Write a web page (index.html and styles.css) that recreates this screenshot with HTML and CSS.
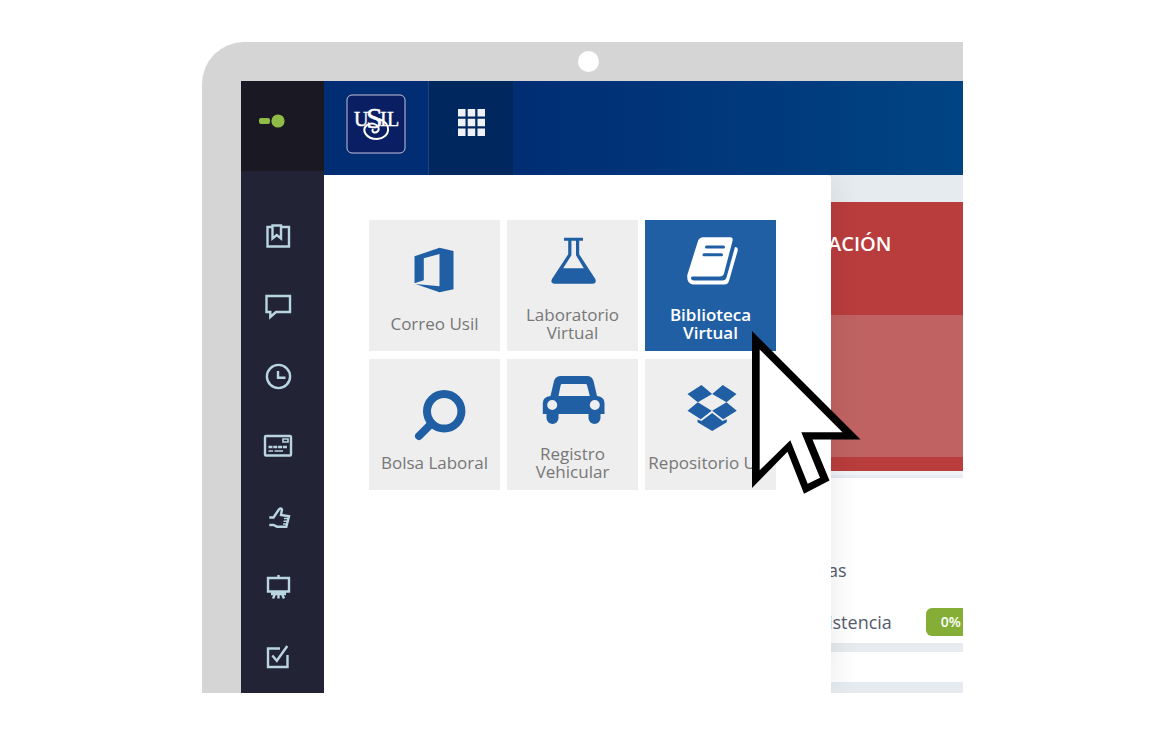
FILE: index.html
```html
<!DOCTYPE html>
<html lang="es">
<head>
  <meta charset="UTF-8" />
  <meta name="viewport" content="width=device-width, initial-scale=1.0" />
  <title>Biblioteca Virtual</title>
  <link rel="stylesheet" href="styles.css">
</head>
<body>
  <div class="device">
    <div class="bezel"><span class="camera"></span></div>

    <div class="screen">
      <aside class="sidebar">
        <button class="toggle" type="button" aria-label="Contraer">
          <svg width="28" height="14" viewBox="0 0 28 14"><rect x="1" y="4" width="11" height="6" rx="2"/><circle cx="20" cy="7" r="6.6"/></svg>
        </button>
        <nav class="side-nav">
          <a href="#" aria-label="Cursos">
            <svg viewBox="0 0 30 30"><path d="M9 6H4.5V25.500H26V6H18M9.500 4.500H18V17.500L13.800 14L9.500 17.500Z"/></svg>
          </a>
          <a href="#" aria-label="Mensajes">
            <svg viewBox="0 0 30 30"><path d="M3.500 5H27V21H13L7.300 26V21H3.500Z"/></svg>
          </a>
          <a href="#" aria-label="Horario">
            <svg viewBox="0 0 30 30"><circle cx="15.500" cy="15.500" r="11.600"/><path d="M15 10V16.700H22.500"/></svg>
          </a>
          <a href="#" aria-label="Pagos">
            <svg viewBox="0 0 30 30"><rect x="2" y="5" width="26" height="19.500" rx="1"/><path d="M20 8H25V11H20Z" stroke-width="1.6"/><path d="M5.500 16H24" stroke-dasharray="4 .8" stroke-width="2.600"/><path d="M5.500 20H10M11.500 20H20" stroke-width="1.500"/></svg>
          </a>
          <a href="#" aria-label="Encuestas">
            <svg viewBox="0 0 30 30"><path d="M6.300 16.500H10.500L16 8.300Q18 6.500 19 8.500L18 14L26 15.300L23.300 25.700H14L10.500 24H6.300"/><path d="M21 17.500H25M20.500 20.300H24.500M20 23H24" stroke-width="1.6"/></svg>
          </a>
          <a href="#" aria-label="Aula">
            <svg viewBox="0 0 30 30"><path d="M5 7H26V20.500H5ZM15.500 4V7M8 23H23M12 23L10 27.500M15.500 23V27.500M19 23L21 27.500"/></svg>
          </a>
          <a href="#" aria-label="Asistencia">
            <svg viewBox="0 0 30 30"><path d="M17 7.500H5V26H24.500V14M9.300 14.500L13.800 19.700L24.300 5"/></svg>
          </a>
        </nav>
      </aside>

      <div class="main">
        <header class="topbar">
          <a class="brand" href="#" aria-label="Inicio">
            <svg class="logo" width="60" height="60" viewBox="0 0 60 60">
              <rect x="1" y="1" width="58" height="58" rx="5"/>
              <text x="8" y="32" font-size="20">U</text>
              <text x="20" y="34" font-size="30">S</text>
              <text x="34" y="32" font-size="20">I</text>
              <text x="41" y="32" font-size="20">L</text>
              <path d="M33 25C46 29 45 44 31 45C20 45 15 36 21 31C28 27 35 33 32 37C29 40 25 38 27 35"/>
            </svg>
          </a>
          <button class="apps-btn" type="button" aria-label="Aplicaciones">
            <svg width="27" height="27" viewBox="0 0 27 27"><path d="M0 0H7.500V7.500H0ZM9.700 0H17.200V7.500H9.700ZM19.500 0H27V7.500H19.500ZM0 9.700H7.500V17.200H0ZM9.700 9.700H17.200V17.200H9.700ZM19.500 9.700H27V17.200H19.500ZM0 19.500H7.500V27H0ZM9.700 19.500H17.200V27H9.700ZM19.500 19.500H27V27H19.500Z"/></svg>
          </button>
        </header>

        <div class="workspace">
          <div class="page">
            <section class="card">
              <h2>ACIÓN</h2>
              <div class="card-body"></div>
            </section>
            <section class="summary">
              <div class="row">as</div>
              <div class="row">istencia <span class="badge">0%</span></div>
            </section>
            <div class="strip"></div>
          </div>

          <!-- apps menu, opens over the page -->
          <div class="apps-menu">
            <a class="tile" href="#">
              <svg viewBox="0 0 64 64"><path d="M11.500 18.300L36.500 9.700L50.500 13V51.300L36.500 54.300L12.500 46L36.500 48.300V16L20.800 20.300V42.300L11.500 45.300Z"/></svg>
              <span>Correo Usil</span>
            </a>
            <a class="tile" href="#">
              <svg viewBox="0 0 64 64"><path fill-rule="evenodd" d="M23 8.700H42V11.700H38.200V25.300L54.300 50Q56 54.700 51.500 54.700H13.800Q9 54.700 11 50L27.200 25.300V11.700H23ZM30.400 11.700V26.300L22.200 39.300H42.800L35 26.300V11.700Z"/></svg>
              <span>Laboratorio<br>Virtual</span>
            </a>
            <a class="tile active" href="#">
              <svg viewBox="0 0 64 64"><path d="M24 8.300H51Q54.500 8.300 53.500 12L45 44.500Q44 47.500 41 47.500H14Q11.500 47.500 12 49.500Q12.500 51.500 15 51.500H43.500Q46.500 51.500 47.500 48.500L56 18Q59.500 18 58.600 22L50 52Q48.800 55.500 45.500 55.500H14Q7.500 55 8.300 46L19 12Q20.500 8.300 24 8.300Z"/><path class="lines" d="M27.500 18H44.500M25 25.700H42.500"/></svg>
              <span>Biblioteca<br>Virtual</span>
              <svg class="pointer" viewBox="0 0 110 164"><path d="M0 0L108.500 108.500H60.500L77.500 149.500L52 162.700L35.500 120.700L0 157Z"/><path class="inner" d="M7.700 18.500L90.500 101.300H49.300L68 146.700L55.700 152.700L38.300 109.300L7.700 139.300Z"/></svg>
            </a>
            <a class="tile" href="#">
              <svg viewBox="0 0 64 64"><path class="ring" d="M28.500 46.500L16 59"/><circle class="ring" cx="41.200" cy="34.300" r="17.200"/></svg>
              <span>Bolsa Laboral</span>
            </a>
            <a class="tile" href="#">
              <svg viewBox="0 0 64 64"><path fill-rule="evenodd" d="M20 8H46Q51 8 52.500 13L56 28Q63.500 29 63.500 35V46H59.500V50A6 6 0 0 1 47.500 50V46H17.500V50A6 6 0 0 1 5.500 50V46H1.800V35Q1.800 29 9.500 28L13 13Q14.500 8 20 8ZM21 16Q20 16 19.700 17L17.500 28H48.800L46 17Q45.700 16 44.500 16ZM6.200 37A5 5 0 0 0 16.200 37A5 5 0 0 0 6.200 37ZM48.800 37A5 5 0 0 0 58.800 37A5 5 0 0 0 48.800 37Z"/></svg>
              <span>Registro<br>Vehicular</span>
            </a>
            <a class="tile" href="#">
              <svg viewBox="0 0 64 64"><path d="M22.500 8L33.200 17L18.800 25.300L8.500 17ZM43.800 8L57.500 17L47.500 25.300L33.200 17ZM18.800 25.300L32.700 33.700L21.800 42.300L8.500 33.700ZM47.500 25.300L57.800 33.700L44.200 42.300L33.200 33.700ZM33.200 36L43.500 44L47.800 42.300V45.300L33.200 54L18.500 45.300V42.500L22.500 44Z"/></svg>
              <span>Repositorio Usil</span>
            </a>
          </div>
        </div>
      </div>
    </div>
  </div>
</body>
</html>
```

FILE: styles.css
```css
:root {
  --blue: #215fa5;
  --icon: #b9d5df;
}
* { margin: 0; padding: 0; box-sizing: border-box; }

body {
  background: #fff;
  font-family: "Open Sans", "Noto Sans", sans-serif;
  padding: 42px 192px 62px 202px;
}
a { color: inherit; text-decoration: none; }
button { border: 0; cursor: pointer; }

.device {
  background: #d5d5d5;
  border-top-left-radius: 42px;
  padding-left: 39px;
  overflow: hidden;
}
.bezel {
  height: 39px;
  display: flex;
  align-items: center;
  justify-content: center;
  padding-right: 28px;
}
.camera {
  width: 21px;
  height: 21px;
  border-radius: 50%;
  background: #fff;
}
.screen {
  display: grid;
  grid-template-columns: 83px 1fr;
  background: #fff;
}

/* sidebar */
.sidebar { background: #232336; }
.toggle {
  display: flex;
  align-items: center;
  width: 100%;
  height: 90px;
  padding: 0 0 10px 17px;
  background: #1a1823;
}
.toggle svg { fill: #8fbc46; }
.side-nav {
  display: flex;
  flex-direction: column;
  padding: 30px 9px 0 0;
}
.side-nav a {
  display: flex;
  align-items: center;
  justify-content: center;
  height: 70px;
}
.side-nav svg {
  width: 30px;
  height: 30px;
  fill: none;
  stroke: var(--icon);
  stroke-width: 2.4;
}

/* top bar */
.main { min-width: 0; display: flex; flex-direction: column; }
.topbar {
  display: flex;
  height: 94px;
  background: linear-gradient(90deg, #002d74 30%, #004483);
}
.brand, .apps-btn {
  display: flex;
  align-items: center;
  justify-content: center;
  padding-bottom: 8px;
}
.brand {
  width: 105px;
  border-right: 1px solid #1d4480;
}
.apps-btn {
  width: 84px;
  padding-bottom: 12px;
  background: #00285f;
}
.apps-btn svg { fill: #eef2f8; }
.logo rect { fill: #0a1f63; stroke: #c5c3da; }
.logo text { fill: #fff; stroke: #fff; stroke-width: .4; font-family: "Liberation Serif", serif; }
.logo path { fill: none; stroke: #fff; stroke-width: 2; }

/* page under the menu */
.workspace { position: relative; flex: 1; }
.page {
  height: 100%;
  padding-top: 27px;
  background: #e6ebef;
  overflow: hidden;
  white-space: nowrap;
}
.card {
  background: #b93d3d;
  border-bottom: 4px solid #f0f4f8;
  padding-bottom: 14px;
  margin-bottom: 3px;
}
.card h2 {
  height: 113px;
  padding: 28px 0 0 504px;
  color: #fff;
  font-size: 20px;
  font-weight: 600;
  line-height: 28px;
}
.card-body { height: 142px; background: #c06262; }
.summary {
  display: flex;
  flex-direction: column;
  gap: 24px;
  padding: 78px 0 7px 504px;
  background: #fff;
  color: #555b6e;
  font-size: 18px;
  line-height: 28px;
}
.row { display: flex; }
.badge {
  margin-left: 34px;
  padding: 0 15px;
  border-radius: 6px;
  background: #84ae36;
  color: #fff;
  font-size: 14px;
  font-weight: 600;
}
.strip { height: 30px; margin: 9px 0 11px; background: #fff; }

/* apps menu */
.apps-menu {
  position: absolute;
  top: 0;
  left: 0;
  bottom: 0;
  width: 507px;
  display: grid;
  grid-template-columns: repeat(3, 131px);
  grid-auto-rows: 131px;
  gap: 8px 7px;
  padding: 45px;
  background: #fff;
  border-top-right-radius: 4px;
  box-shadow: 8px 0 24px rgba(0, 0, 0, .06);
  clip-path: inset(0 -40px 0 0);
}
.tile {
  position: relative;
  display: flex;
  flex-direction: column;
  align-items: center;
  justify-content: center;
  background: #eee;
  color: #777;
  font-size: 17px;
  line-height: 18px;
  text-align: center;
  white-space: nowrap;
}
.tile svg {
  width: 64px;
  height: 64px;
  margin-bottom: 13px;
  fill: var(--blue);
}
.tile .ring {
  fill: none;
  stroke: var(--blue);
  stroke-width: 8;
  stroke-linecap: round;
}
.tile.active {
  z-index: 1;
  background: var(--blue);
  color: #fff;
  font-weight: 600;
}
.active svg { fill: #fff; }
.active .lines { stroke: var(--blue); stroke-width: 3; stroke-linecap: round; }
.tile .pointer {
  position: absolute;
  left: 107px;
  top: 111px;
  width: 110px;
  height: 164px;
  margin: 0;
  fill: #000;
}
.pointer .inner { fill: #fff; }
```
